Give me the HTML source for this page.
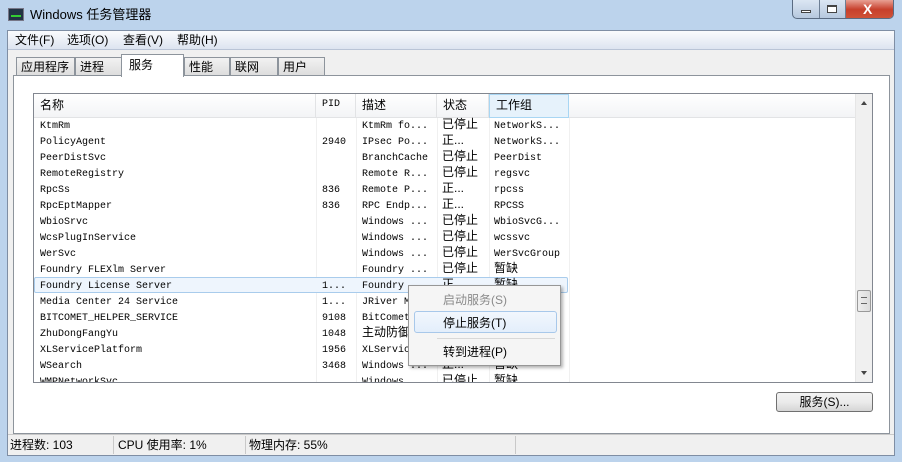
<!DOCTYPE html>
<html><head><meta charset="utf-8"><style>
*{margin:0;padding:0;box-sizing:border-box}
body{width:902px;height:462px;overflow:hidden;background:#bcd3ec;font-family:"Liberation Sans","Noto Sans CJK SC",sans-serif;font-size:12px;line-height:14px;color:#000;position:relative}
.abs{position:absolute}
.title{left:30px;top:7px;font-size:13px;line-height:16px}
.client{left:7px;top:30px;width:888px;height:426px;background:#f0f0f0;border:1px solid #7f8ea4}
.menu{left:0;top:0;width:886px;height:19px;background:linear-gradient(#fafbfd,#dde4f0);border-bottom:1px solid #b9c4d6}
.menu span{position:absolute;top:2px;line-height:14px}
.tab{top:26px;height:19px;border:1px solid #8d949c;border-bottom:none;background:linear-gradient(#f2f2f2,#dcdcdc);padding:0 4px;line-height:18px;font-size:12px}
.panel{left:5px;top:44px;width:877px;height:359px;background:#fff;border:1px solid #8d949c}
.list{left:19px;top:17px;width:840px;height:290px;border:1px solid #828790;background:#fff;overflow:hidden}
.hdr{left:0;top:0;width:822px;height:24px;background:linear-gradient(#fff,#f3f4f6);border-bottom:1px solid #e2e3e5}
.hc{position:absolute;top:0;height:24px;padding:0 0 0 6px;line-height:22px;border-right:1px solid #e2e3e5}
.row{position:absolute;left:0;height:16px;width:534px;font-family:"Liberation Mono",monospace;font-size:10px;line-height:16px}
.row span{position:absolute;top:2px;white-space:nowrap;line-height:16px}
.row span.c{font-family:"Liberation Sans","Noto Sans CJK SC",sans-serif;font-size:12px;top:-1px}
.vl{position:absolute;top:24px;bottom:0;width:1px;background:#f0f0f0}
.sb{left:821px;top:0;width:17px;height:288px;background:#f0f0f0;border-left:1px solid #e6e6e6}
.cm{left:408px;top:285px;width:153px;height:81px;background:#f5f5f5;border:1px solid #979797;box-shadow:2px 2px 3px rgba(0,0,0,.3);font-size:12px}
.cm div{position:absolute;left:34px;line-height:14px}
</style></head><body>
<div class="abs" style="left:8px;top:8px;width:16px;height:13px;background:#234;border:1px solid #778"><div style="margin:3px 2px;height:5px;border-bottom:2px solid #3c3"></div></div>
<div class="abs title">Windows 任务管理器</div>
<div class="abs" style="left:792px;top:0;width:102px;height:19px;border:1px solid #5a6b82;border-top:none;border-radius:0 0 5px 5px;background:linear-gradient(#dbe6f3,#b6c8de);overflow:hidden">
<div class="abs" style="left:26px;top:0;width:1px;height:19px;background:#6d7f95"></div>
<div class="abs" style="left:52px;top:0;width:1px;height:19px;background:#6d7f95"></div>
<div class="abs" style="left:8px;top:10px;width:10px;height:3px;border:1px solid #444;background:#fff"></div>
<div class="abs" style="left:34px;top:5px;width:10px;height:8px;border:1px solid #444;border-top-width:2px;background:#fff"></div>
<div class="abs" style="left:53px;top:0;width:49px;height:19px;background:linear-gradient(#e8a093,#c7402c 50%,#d05438)"></div>
<div class="abs" style="left:70px;top:1px;color:#fff;font-weight:bold;font-size:14px;line-height:16px">X</div>
</div>
<div class="abs client">
<div class="abs menu"><span style="left:7px">文件(F)</span><span style="left:59px">选项(O)</span><span style="left:115px">查看(V)</span><span style="left:169px">帮助(H)</span></div>
<div class="abs tab" style="left:8px;width:59px">应用程序</div>
<div class="abs tab" style="left:67px;width:47px">进程</div>
<div class="abs tab" style="left:176px;width:46px">性能</div>
<div class="abs tab" style="left:222px;width:48px">联网</div>
<div class="abs tab" style="left:270px;width:47px">用户</div>
<div class="abs panel">
<div class="abs list">
<div class="abs hdr">
<div class="hc" style="left:0;width:282px">名称</div>
<div class="hc" style="left:282px;width:40px;font-family:'Liberation Mono',monospace;font-size:10px">PID</div>
<div class="hc" style="left:322px;width:81px">描述</div>
<div class="hc" style="left:403px;width:52px">状态</div>
<div class="hc" style="left:455px;width:80px;background:#e6f2fb;border:1px solid #a8d6f3;line-height:20px">工作组</div>
</div>
<div class="vl" style="left:282px"></div><div class="vl" style="left:322px"></div><div class="vl" style="left:403px"></div><div class="vl" style="left:455px"></div><div class="vl" style="left:535px"></div>
<div id="rows"></div>
<div class="abs sb">
<div class="abs" style="left:5px;top:7px;border:3px solid transparent;border-bottom:4px solid #444;border-top:0"></div>
<div class="abs" style="left:1px;top:196px;width:14px;height:22px;background:linear-gradient(90deg,#eee,#dcdcdc);border:1px solid #999;border-radius:2px"><div style="margin:6px 3px;height:7px;border-top:1px solid #666;border-bottom:1px solid #666"></div></div>
<div class="abs" style="left:5px;top:277px;border:3px solid transparent;border-top:4px solid #444;border-bottom:0"></div>
</div>
</div>
<div class="abs" style="left:762px;top:316px;width:97px;height:20px;border:1px solid #707070;border-radius:3px;background:linear-gradient(#f2f2f2,#ebebeb 50%,#d5d5d5);text-align:center;line-height:18px">服务(S)...</div>
</div>
<div class="abs" style="left:0;top:403px;width:886px;height:21px;border-top:1px solid #c9c9c9">
<span class="abs" style="left:2px;top:3px">进程数: 103</span>
<div class="abs" style="left:105px;top:1px;width:1px;height:18px;background:#c9c9c9"></div>
<span class="abs" style="left:110px;top:3px">CPU 使用率: 1%</span>
<div class="abs" style="left:237px;top:1px;width:1px;height:18px;background:#c9c9c9"></div>
<span class="abs" style="left:241px;top:3px">物理内存: 55%</span>
<div class="abs" style="left:507px;top:1px;width:1px;height:18px;background:#c9c9c9"></div>
</div>
</div>
<div class="abs" style="left:121px;top:54px;width:63px;height:23px;background:#fff;border:1px solid #8d949c;border-bottom:none;padding:0 0 0 7px;line-height:20px">服务</div>
<div class="abs cm">
<div style="top:7px;color:#8a8a8a">启动服务(S)</div>
<div style="left:5px;top:25px;width:143px;height:22px;border:1px solid #a8c8ea;border-radius:3px;background:linear-gradient(#f2f7fd,#e3eefb)"></div>
<div style="top:30px">停止服务(T)</div>
<div style="left:28px;top:52px;width:118px;height:1px;background:#d8d8d8"></div>
<div style="top:59px">转到进程(P)</div>
</div>
<script>
var d=[["KtmRm","","KtmRm fo...","已停止","NetworkS..."],["PolicyAgent","2940","IPsec Po...","正...","NetworkS..."],["PeerDistSvc","","BranchCache","已停止","PeerDist"],["RemoteRegistry","","Remote R...","已停止","regsvc"],["RpcSs","836","Remote P...","正...","rpcss"],["RpcEptMapper","836","RPC Endp...","正...","RPCSS"],["WbioSrvc","","Windows ...","已停止","WbioSvcG..."],["WcsPlugInService","","Windows ...","已停止","wcssvc"],["WerSvc","","Windows ...","已停止","WerSvcGroup"],["Foundry FLEXlm Server","","Foundry ...","已停止","暂缺"],["Foundry License Server","1...","Foundry ...","正...","暂缺"],["Media Center 24 Service","1...","JRiver M...","",""],["BITCOMET_HELPER_SERVICE","9108","BitComet...","",""],["ZhuDongFangYu","1048","主动防御","",""],["XLServicePlatform","1956","XLServic...","",""],["WSearch","3468","Windows ...","正...","暂缺"],["WMPNetworkSvc","","Windows ...","已停止","暂缺"]];
var x=[6,288,328,408,460],h="";
d.forEach(function(r,i){var s='<div class="row" style="top:'+(23+i*16)+'px'+(i==10?';background:#eef5fd;border:1px solid #a9ccec;border-radius:2px':'')+'">';
r.forEach(function(c,j){var cl=/[\u4e00-\u9fff]/.test(c)?' class="c"':'';s+='<span'+cl+' style="left:'+(x[j]-(i==10?1:0))+'px'+(i==10?';margin-top:-1px':'')+'">'+c+'</span>'});h+=s+'</div>'});
document.getElementById('rows').innerHTML=h;
</script>
</body></html>
